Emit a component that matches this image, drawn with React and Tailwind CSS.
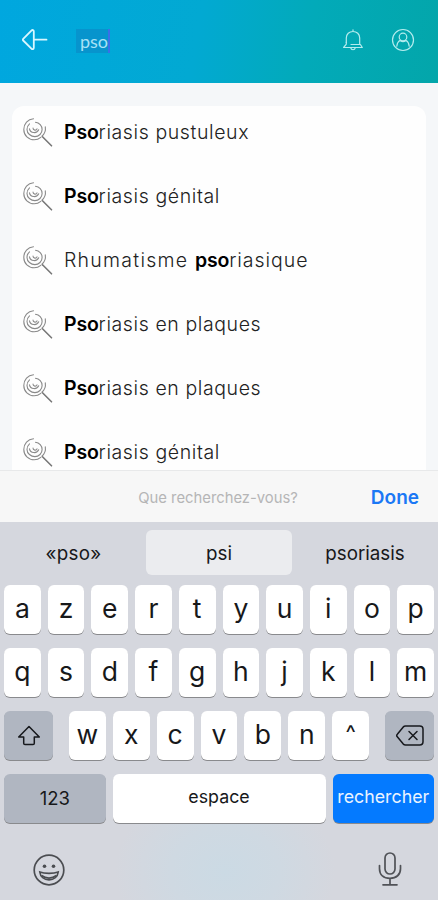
const RESULTS = [
  ['', 'Pso', 'riasis pustuleux'],
  ['', 'Pso', 'riasis génital'],
  ['Rhumatisme ', 'pso', 'riasique'],
  ['', 'Pso', 'riasis en plaques'],
  ['', 'Pso', 'riasis en plaques'],
  ['', 'Pso', 'riasis génital'],
]

const ROWS = ['azertyuiop', 'qsdfghjklm']

function BackIcon() {
  return (
    <svg width="26" height="22" viewBox="0 0 26 22" fill="none" stroke="#d9f7ff" strokeWidth="1.8" strokeLinecap="round" strokeLinejoin="round">
      <path d="M1.2 9.9 9.4 1.6c1.1-1.1 2.4-.6 2.4.8v16.4c0 1.400-1.300 1.900-2.400.8L1.200 11.500c-.5-.5-.5-1.100 0-1.600Z" />
      <path d="M12.500 10.700H24.500" />
    </svg>
  )
}

function BellIcon() {
  return (
    <svg width="22" height="24" viewBox="0 0 22 24" fill="none" stroke="#b4ecee" strokeWidth="1.2" strokeLinecap="round" strokeLinejoin="round">
      <path d="M11 1.800v1.600M4.300 14.500V10c0-3.900 2.900-6.500 6.700-6.500s6.700 2.600 6.700 6.500v6.300" />
      <path d="M9 16.500h9.400l1.900 3H1.600l2.700-3.300v-2M8.800 19.800c.4 2.600 4 2.600 4.400 0" />
    </svg>
  )
}

function ProfileIcon() {
  return (
    <svg width="24" height="24" viewBox="0 0 24 24" fill="none" stroke="#b4ecee" strokeWidth="1.200" strokeLinecap="round" strokeLinejoin="round">
      <circle cx="12" cy="12" r="10.500" />
      <circle cx="12" cy="9" r="3.800" />
      <path d="M5.800 18.200c.3-3 1.600-5 3.400-6 .3 1.800 5.300 1.800 5.600 0 1.800 1 3.100 3 3.400 6" />
    </svg>
  )
}

function SearchIcon() {
  return (
    <svg className="shrink-0" width="30" height="30" viewBox="0 0 30 30" fill="none" stroke="#8a8a8a" strokeWidth="1.1" strokeLinecap="round">
      <path d="M10.500.8C4.800 1.200.8 5.800.8 11.400c0 6 4.700 10.400 10.400 10.400 2.600 0 4.800-.9 6.600-2.400" />
      <path d="M22.300 8.800c.5 3.300-.7 7-3.400 9.400" />
      <path d="M12.500 4.200c3.800.5 6.600 3.500 6.600 7.200 0 4-3.200 7.200-7.200 7.200S4 15.500 4 11.400c0-2.300.9-4.200 2.500-5.600" />
      <path d="M6.500 10.800c.8 4.500 7.400 5.200 9.200 1M10 10c0 2.500 3.400 2.800 4 .8" />
      <path d="m19.500 18.800 9 9" stroke="#777" strokeWidth="1.600" />
    </svg>
  )
}

function ShiftIcon() {
  return (
    <svg width="24" height="22" viewBox="0 0 24 22" fill="none" stroke="#16181c" strokeWidth="1.5" strokeLinejoin="round">
      <path d="M12 1.500 22.300 12h-5v6.200c0 .8-.5 1.300-1.300 1.300H8c-.8 0-1.300-.5-1.300-1.300V12h-5L12 1.500Z" />
    </svg>
  )
}

function DeleteIcon() {
  return (
    <svg width="28" height="21" viewBox="0 0 28 21" fill="none" stroke="#16181c" strokeWidth="1.500" strokeLinecap="round" strokeLinejoin="round">
      <path d="M9.500 1h14.200C25.800 1 27 2.200 27 4.200v12.600c0 2-1.200 3.200-3.300 3.200H9.500c-.9 0-1.600-.3-2.200-.9L1.300 11.800c-.8-.9-.8-1.700 0-2.600l6-7.300C7.900 1.300 8.600 1 9.500 1Z" />
      <path d="m13 6.500 8 8m0-8-8 8" />
    </svg>
  )
}

function SmileIcon() {
  return (
    <svg width="32" height="32" viewBox="0 0 32 32" fill="none" stroke="#4b4d51" strokeWidth="1.700">
      <circle cx="16" cy="16" r="14.800" />
      <circle cx="11.500" cy="12.300" r="1.800" fill="#4b4d51" stroke="none" />
      <circle cx="20.500" cy="12.300" r="1.800" fill="#4b4d51" stroke="none" />
      <path d="M6.800 18c2.500 1 5.500 1.400 9.200 1.400s6.700-.4 9.200-1.400c-.5 4.800-4.300 7.800-9.200 7.800S7.300 22.800 6.800 18Z" />
      <path d="M8.500 21.500c4.500 3.500 10.500 3.500 15 0" />
    </svg>
  )
}

function MicIcon() {
  return (
    <svg width="24" height="34" viewBox="0 0 24 34" fill="none" stroke="#505257" strokeWidth="1.700" strokeLinecap="round">
      <rect x="7" y="1" width="10" height="21" rx="5" />
      <path d="M1.500 13.500v3.200c0 6 4.200 9.600 10.500 9.600s10.500-3.600 10.500-9.600v-3.200M12 26.500v6M5 32.800h14" />
    </svg>
  )
}

function Key({ children, className = 'flex-1 bg-white text-[26.5px] pb-0.5' }) {
  return (
    <div className={`flex h-[49px] min-w-0 items-center justify-center rounded-[6px] shadow-[0_1px_0_#898a8d] ${className}`}>
      {children}
    </div>
  )
}

export default function App() {
  return (
    <div className="flex h-[900px] w-full flex-col overflow-hidden bg-[#f5f7f9] font-['Inter',sans-serif] text-[#17181a]">
      <header className="flex h-[83px] shrink-0 items-center bg-[linear-gradient(100deg,#00a7df_0%,#02a9d2_45%,#02aab9_70%,#03a6aa_100%)] pr-[23px] pl-[22px]">
        <div className="-mt-1"><BackIcon /></div>
        <div className="-mt-0.5 ml-7 flex h-6 w-[34px] items-center justify-end border-r-2 border-[#3b6fe8] bg-[#0794cd] font-['Lato',sans-serif] text-[18px] leading-6 text-[#a9e2f6]">
          pso
        </div>
        <div className="-mt-1 ml-auto flex items-center gap-[27px]">
          <BellIcon />
          <ProfileIcon />
        </div>
      </header>

      <main className="h-[387px] shrink-0 overflow-hidden px-3 pt-[23px]">
        <ul className="h-[400px] rounded-t-xl bg-[#fefefe]">
          {RESULTS.map(([before, match, after], i) => (
            <li key={i} className="flex h-16 items-start gap-3 pt-3 pl-[11px]">
              <SearchIcon />
              <p className="-mt-px -ml-px text-[19.5px] leading-[30px] font-light tracking-[0.6px] whitespace-pre text-[#222]">
                <span className="tracking-[1.25px]">{before}</span>
                <b className="font-semibold tracking-[-0.2px] text-black">{match}</b>
                <span className={before ? 'tracking-[0.95px]' : undefined}>{after}</span>
              </p>
            </li>
          ))}
        </ul>
      </main>

      <div className="flex h-[52px] shrink-0 items-center justify-end border-t border-[#e8e9ea] bg-[#f7f7f7] pt-[3px] pr-[19px]">
        <span className="mr-[73px] text-[14.8px] text-[#b5b5b6]">Que recherchez-vous?</span>
        <span className="text-[19px] font-semibold text-[#1b78f5]">Done</span>
      </div>

      <section className="flex-1 bg-[#d5d7de] bg-[radial-gradient(ellipse_110px_90px_at_225px_350px,#cbdae4_0%,#cfd9e2_50%,#d5d7de_100%)] px-1 pt-2">
        <div className="flex h-[45px] items-center text-center text-[18.8px]">
          <div className="w-[142px] pt-[3px] pr-[3px] tracking-[0.3px]">«pso»</div>
          <div className="flex h-full w-[146px] items-center justify-center rounded-md bg-[#ebecef] pt-[3px]">psi</div>
          <div className="flex-1 pt-[3px] pl-1">psoriasis</div>
        </div>

        <div className="mt-[10px] flex flex-col gap-[14px]">
          {ROWS.map((row) => (
            <div key={row} className="flex gap-[7px]">
              {row.split('').map((c) => <Key key={c}>{c}</Key>)}
            </div>
          ))}
          <div className="flex">
            <Key className="w-[49px] bg-[#b0b6c1]"><ShiftIcon /></Key>
            <div className="mx-4 flex flex-1 gap-[7px]">
              {'wxcvbn'.split('').map((c) => <Key key={c}>{c}</Key>)}
              <Key className="flex-1 bg-white pb-1 text-[22px]">^</Key>
            </div>
            <Key className="w-[49px] bg-[#b0b6c1]"><DeleteIcon /></Key>
          </div>
          <div className="flex gap-[7px]">
            <Key className="w-[101.5px] bg-[#b0b6c1] pt-px text-[18.5px]">123</Key>
            <Key className="flex-1 bg-white pb-0.5 text-[17.8px]">espace</Key>
            <Key className="w-[101.5px] bg-[#047aff] pb-0.5 text-[17.8px] text-[#eaf4ff]">rechercher</Key>
          </div>
        </div>

        <div className="mt-[29px] flex items-center justify-between pr-8 pl-[33px]">
          <div className="-ml-1 pt-px"><SmileIcon /></div>
          <MicIcon />
        </div>
      </section>
    </div>
  )
}
